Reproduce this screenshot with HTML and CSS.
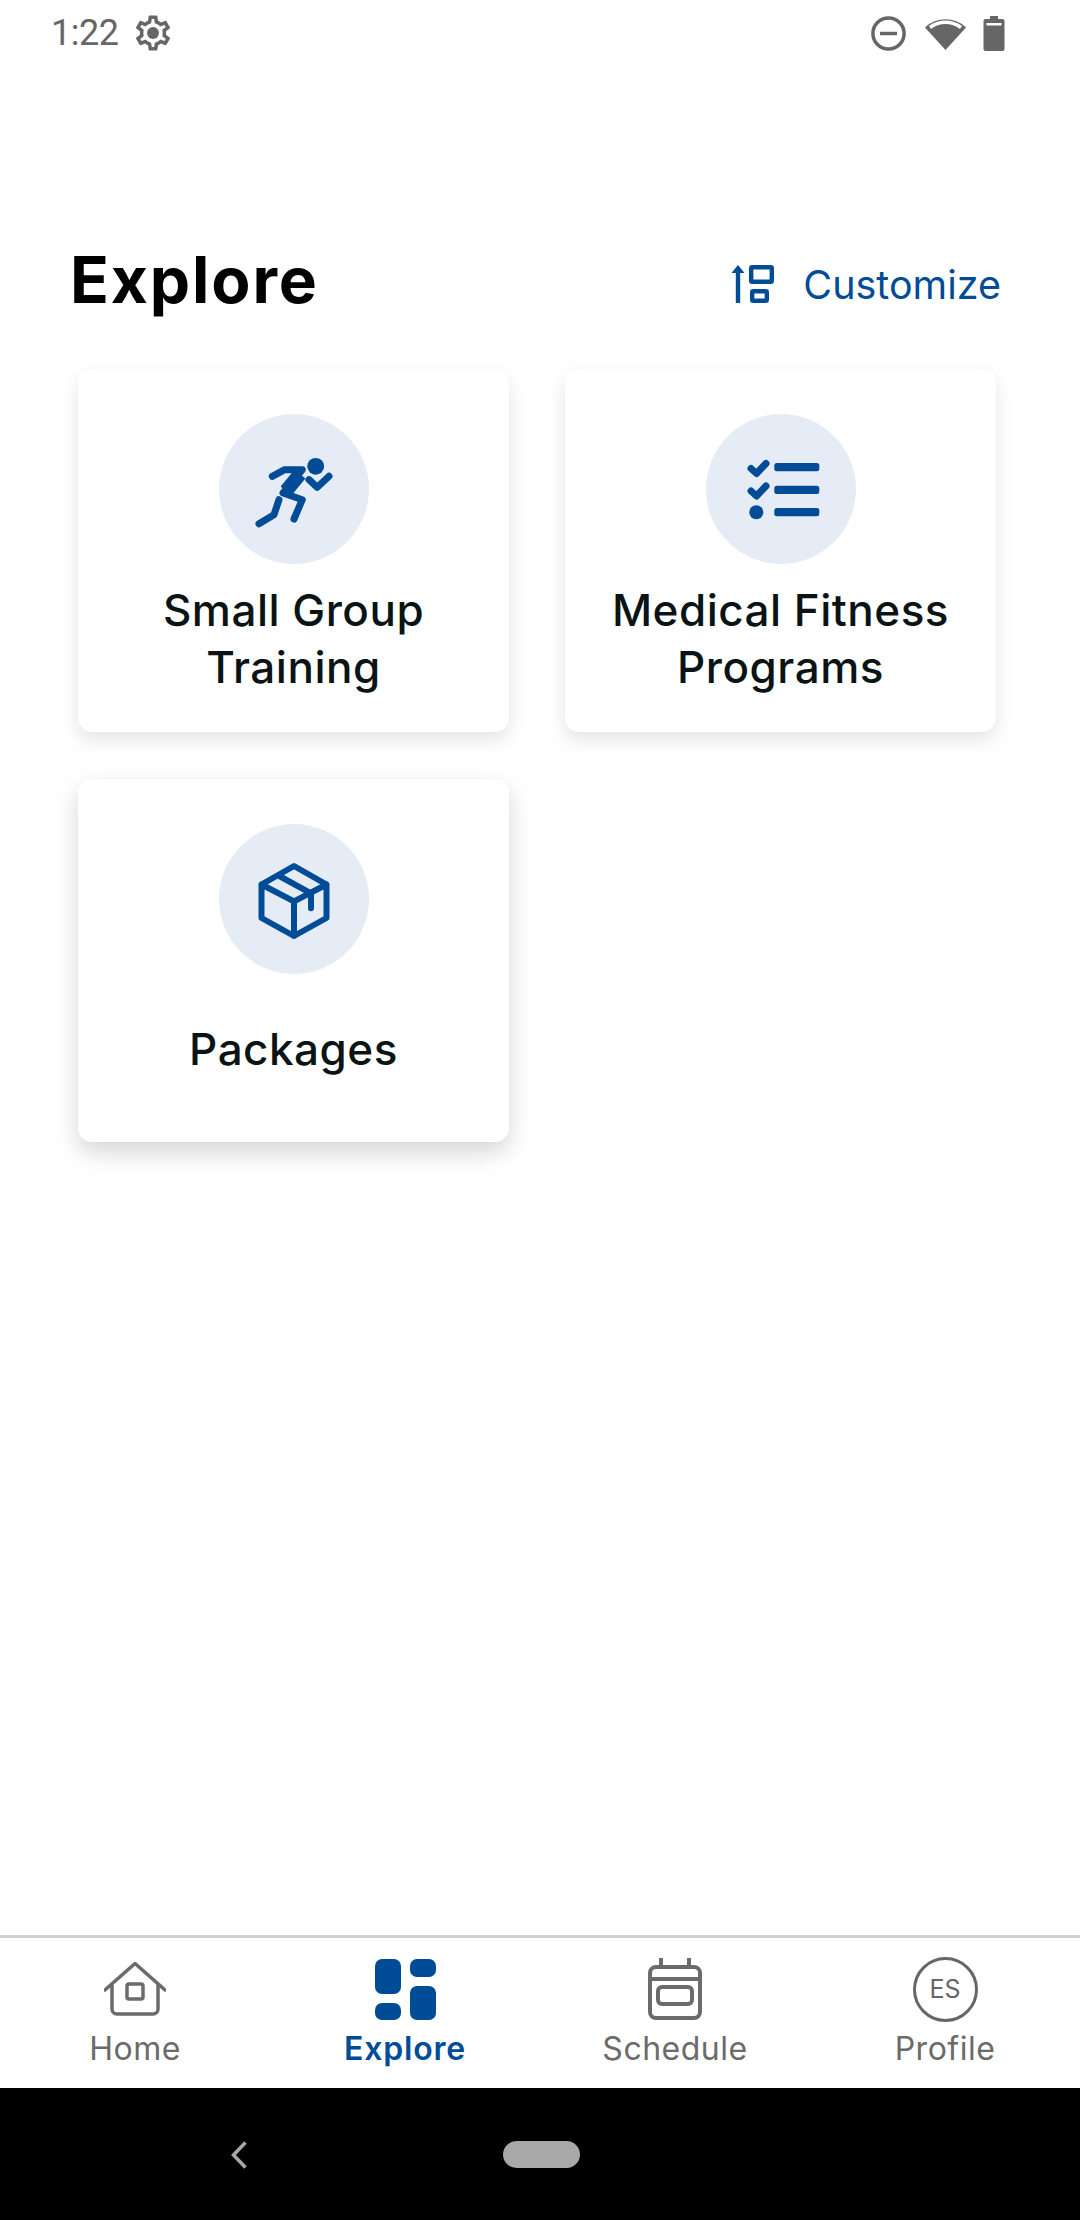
FILE: index.html
```html
<!DOCTYPE html>
<html lang="en">
<head>
  <meta charset="UTF-8" />
  <meta name="viewport" content="width=device-width, initial-scale=1.0" />
  <title>Explore</title>
  <link rel="stylesheet" href="styles.css">
</head>
<body>

  <div class="status-bar">
    <span class="clock">1:22</span>
    <svg class="gear" viewBox="0 0 24 24"><path d="M19.43 12.98c.04-.32.07-.64.07-.98 0-.34-.03-.66-.07-.98l2.11-1.65c.19-.15.24-.42.12-.64l-2-3.46c-.09-.16-.26-.25-.44-.25-.06 0-.12.01-.17.03l-2.49 1c-.52-.4-1.08-.73-1.69-.98l-.38-2.65C14.46 2.18 14.25 2 14 2h-4c-.25 0-.46.18-.49.42l-.38 2.65c-.61.25-1.17.59-1.69.98l-2.49-1c-.06-.02-.12-.03-.18-.03-.17 0-.34.09-.43.25l-2 3.46c-.13.22-.07.49.12.64l2.11 1.65c-.04.32-.07.65-.07.98 0 .33.03.66.07.98l-2.11 1.65c-.19.15-.24.42-.12.64l2 3.46c.09.16.26.25.44.25.06 0 .12-.01.17-.03l2.49-1c.52.4 1.08.73 1.69.98l.38 2.65c.03.24.24.42.49.42h4c.25 0 .46-.18.49-.42l.38-2.65c.61-.25 1.17-.59 1.69-.98l2.49 1c.06.02.12.03.18.03.17 0 .34-.09.43-.25l2-3.46c.12-.22.07-.49-.12-.64l-2.11-1.65zm-1.98-1.71c.04.31.05.52.05.73 0 .21-.02.43-.05.73l-.14 1.13.89.7 1.08.84-.7 1.21-1.27-.51-1.04-.42-.9.68c-.43.32-.84.56-1.25.73l-1.06.43-.16 1.13-.2 1.35h-1.4l-.19-1.35-.16-1.13-1.06-.43c-.43-.18-.83-.41-1.23-.71l-.91-.7-1.06.43-1.27.51-.7-1.21 1.08-.84.89-.7-.14-1.13c-.03-.31-.05-.54-.05-.74s.02-.43.05-.73l.14-1.13-.89-.7-1.08-.84.7-1.21 1.27.51 1.04.42.9-.68c.43-.32.84-.56 1.25-.73l1.06-.43.16-1.13.2-1.35h1.39l.19 1.35.16 1.13 1.06.43c.43.18.83.41 1.23.71l.91.7 1.06-.43 1.27-.51.7 1.21-1.07.85-.89.7.14 1.13z"/><circle cx="12" cy="12" r="3.4"/></svg>
    <div class="status-right">
      <svg class="dnd" viewBox="0 0 35 35"><circle cx="17.5" cy="17.5" r="15.6"/><path d="M9 17.5h17"/></svg>
      <svg class="wifi" viewBox="0 0 41 34"><path d="M0 11.5C11.5 .6 29.5 .6 41 11.5L20.5 34z"/><path class="wifi-gap" d="M5 11.5C14 4.6 27 4.6 36 11.5"/></svg>
      <svg class="battery" viewBox="0 0 22 35"><path d="M7 0h8v3h4.500a2 2 0 0 1 2 2v28a2 2 0 0 1-2 2h-17a2 2 0 0 1-2-2V5a2 2 0 0 1 2-2H7z"/><rect class="battery-gap" x="3.500" y="7" width="15" height="2.500"/></svg>
    </div>
  </div>

  <main class="content">
    <div class="page-head">
      <h1>Explore</h1>
      <a class="customize">
        <svg class="customize-icon" viewBox="0 0 44 40"><path class="fill-blue" d="M7 1l6.500 8h-13z"/><path d="M7 8V39"/><rect x="20.200" y="3.200" width="20.600" height="14.600" rx="1"/><rect x="21.200" y="27.200" width="14.600" height="9.600" rx="1"/></svg>
        <span>Customize</span>
      </a>
    </div>

    <div class="card-grid">
      <div class="card">
        <div class="icon-circle">
          <svg viewBox="0 0 150 150">
            <circle class="fill-blue" cx="96.700" cy="52.300" r="8.400"/>
            <path d="M53.300 62.300L65.700 55.700H83.300L64 79L83.300 85.700L75 105"/>
            <path class="torso" d="M81 60L67 77"/>
            <path d="M60 85.700L55 100.700L40 109.700M90 65.700L98.300 73.300L110 62.300"/>
          </svg>
        </div>
        <p class="card-title">Small Group Training</p>
      </div>
      <div class="card">
        <div class="icon-circle">
          <svg viewBox="0 0 150 150">
            <path d="M45 54.500L50.500 59.500L60 49.500M45 77L50.500 82L60 72"/>
            <circle class="fill-blue" cx="50.300" cy="98.300" r="7"/>
            <rect class="fill-blue" x="68.300" y="49" width="45" height="8.300" rx="2.500"/>
            <rect class="fill-blue" x="68.300" y="71.700" width="45" height="8.300" rx="2.500"/>
            <rect class="fill-blue" x="68.300" y="94" width="45" height="8.300" rx="2.500"/>
          </svg>
        </div>
        <p class="card-title">Medical Fitness Programs</p>
      </div>
      <div class="card card-lower">
        <div class="icon-circle">
          <svg class="box" viewBox="0 0 150 150">
            <path d="M75 42L107.500 60.500V94L75 112L42.500 94V60.500ZM42.500 60.500L75 77.300L107.500 60.500M75 77.300V112M60.300 52L92 69.300V84.300"/>
          </svg>
        </div>
        <p class="card-title card-title-single">Packages</p>
      </div>
    </div>
  </main>

  <nav class="tab-bar">
    <div class="tab">
      <div class="tab-icon">
        <svg class="home" viewBox="0 0 62 54"><path d="M1 28L31 1.500L61 28M8 22V47a5 5 0 0 0 5 5H49a5 5 0 0 0 5-5V22"/><rect x="23" y="22" width="16" height="15" rx="2"/></svg>
      </div>
      <span>Home</span>
    </div>
    <div class="tab active">
      <div class="tab-icon">
        <svg class="grid" viewBox="0 0 61 61"><rect width="26" height="35" rx="7"/><rect y="44" width="26" height="17" rx="7"/><rect x="35" width="26" height="18" rx="7"/><rect x="35" y="27" width="26" height="34" rx="7"/></svg>
      </div>
      <span>Explore</span>
    </div>
    <div class="tab">
      <div class="tab-icon">
        <svg class="calendar" viewBox="0 0 54 62"><path d="M13 0V9M41 0V9M2 21H52"/><rect x="2" y="9" width="50" height="51" rx="6"/><rect x="10" y="29" width="34" height="17" rx="4"/></svg>
      </div>
      <span>Schedule</span>
    </div>
    <div class="tab">
      <div class="tab-icon">
        <div class="avatar">ES</div>
      </div>
      <span>Profile</span>
    </div>
  </nav>

  <div class="system-nav">
    <svg class="back" viewBox="0 0 16 28"><path d="M14.500 1.500L2.500 14L14.500 26.500"/></svg>
    <div class="home-pill"></div>
  </div>

</body>
</html>
```

FILE: styles.css
```css
:root { --blue: #004c97; --grey: #6b6b6b; --ink: #0a1414; }
* { box-sizing: border-box; }
html, body { margin: 0; height: 100%; }
body { display: flex; flex-direction: column; height: 2220px; background: white; font-family: 'Inter', sans-serif; }

.status-bar { display: flex; align-items: center; height: 66px; padding: 0 75px 0 51px; color: #666; flex: none; }
.clock { font-family: 'Roboto', sans-serif; font-size: 36px; letter-spacing: -0.5px; }
.gear { width: 42px; height: 42px; margin-left: 14px; fill: #666; }
.status-right { display: flex; align-items: center; margin-left: auto; }
.dnd { width: 35px; height: 35px; fill: none; stroke: #666; stroke-width: 3.5; }
.wifi { width: 41px; height: 34px; margin-left: 19px; fill: #666; }
.wifi-gap { fill: none; stroke: white; stroke-width: 3.5; }
.battery { width: 22px; height: 35px; margin-left: 17px; fill: #666; }
.battery-gap { fill: white; }

.content { flex: 1; padding: 174px 79px 0 70px; }
.page-head { display: flex; justify-content: space-between; align-items: center; height: 80px; }
h1 { margin: 0; padding-bottom: 2px; font-size: 64px; font-weight: 700; letter-spacing: 1.9px; color: black; }
.customize { display: flex; align-items: center; gap: 28px; color: var(--blue); font-size: 39.5px; padding-top: 10px; }
.customize-icon { width: 44px; height: 40px; margin-top: -2px; fill: none; stroke: var(--blue); stroke-width: 4.400; }

.card-grid { display: grid; grid-template-columns: 431px 431px; grid-auto-rows: 363px; column-gap: 56px; row-gap: 47px; margin: 49px 0 0 8px; }
.card { display: flex; flex-direction: column; align-items: center; padding-top: 45px; background: white; border-radius: 14px; box-shadow: 0 8px 20px rgba(0, 0, 0, 0.11); }
.card-lower { box-shadow: 0 10px 24px rgba(0, 0, 0, 0.17); }
.icon-circle { width: 150px; height: 150px; border-radius: 50%; background: #e6ecf5; flex: none; }
.icon-circle svg { display: block; width: 150px; height: 150px; fill: none; stroke: var(--blue); stroke-width: 7; stroke-linecap: round; stroke-linejoin: round; }
.icon-circle .box { stroke-width: 6; }
.icon-circle .torso { stroke-width: 14; stroke-linecap: butt; }
.icon-circle .fill-blue { fill: var(--blue); stroke: none; }
.customize-icon .fill-blue { fill: var(--blue); stroke: none; }
.card-title { margin: 18px 0 0; padding: 0 30px; font-size: 44px; line-height: 57px; font-weight: 500; letter-spacing: 0.5px; text-align: center; color: var(--ink); }
.card-title-single { margin-top: 47px; }

.tab-bar { display: grid; grid-template-columns: repeat(4, 270px); flex: none; height: 153px; padding-top: 18px; border-top: 3px solid #d0d0d0; background: white; }
.tab { display: flex; flex-direction: column; align-items: center; color: var(--grey); font-size: 32px; line-height: 38px; letter-spacing: 0.5px; }
.tab.active { color: var(--blue); font-weight: 600; letter-spacing: 0.8px; }
.tab-icon { display: flex; align-items: center; justify-content: center; height: 66px; margin-bottom: 8px; }
.home { width: 62px; height: 54px; fill: none; stroke: var(--grey); stroke-width: 3.500; stroke-linecap: round; stroke-linejoin: round; }
.grid { width: 61px; height: 61px; fill: var(--blue); }
.calendar { width: 54px; height: 62px; fill: none; stroke: var(--grey); stroke-width: 4; }
.avatar { display: flex; align-items: center; justify-content: center; width: 65px; height: 65px; border: 3px solid #666; border-radius: 50%; font-size: 25px; letter-spacing: 0; color: #666; }

.system-nav { position: relative; flex: none; height: 132px; background: black; }
.back { position: absolute; left: 231px; top: 53px; width: 16px; height: 28px; fill: none; stroke: #a8a8a8; stroke-width: 3.500; }
.home-pill { position: absolute; left: 503px; top: 53px; width: 77px; height: 27px; border-radius: 14px; background: #a8a8a8; }
```
